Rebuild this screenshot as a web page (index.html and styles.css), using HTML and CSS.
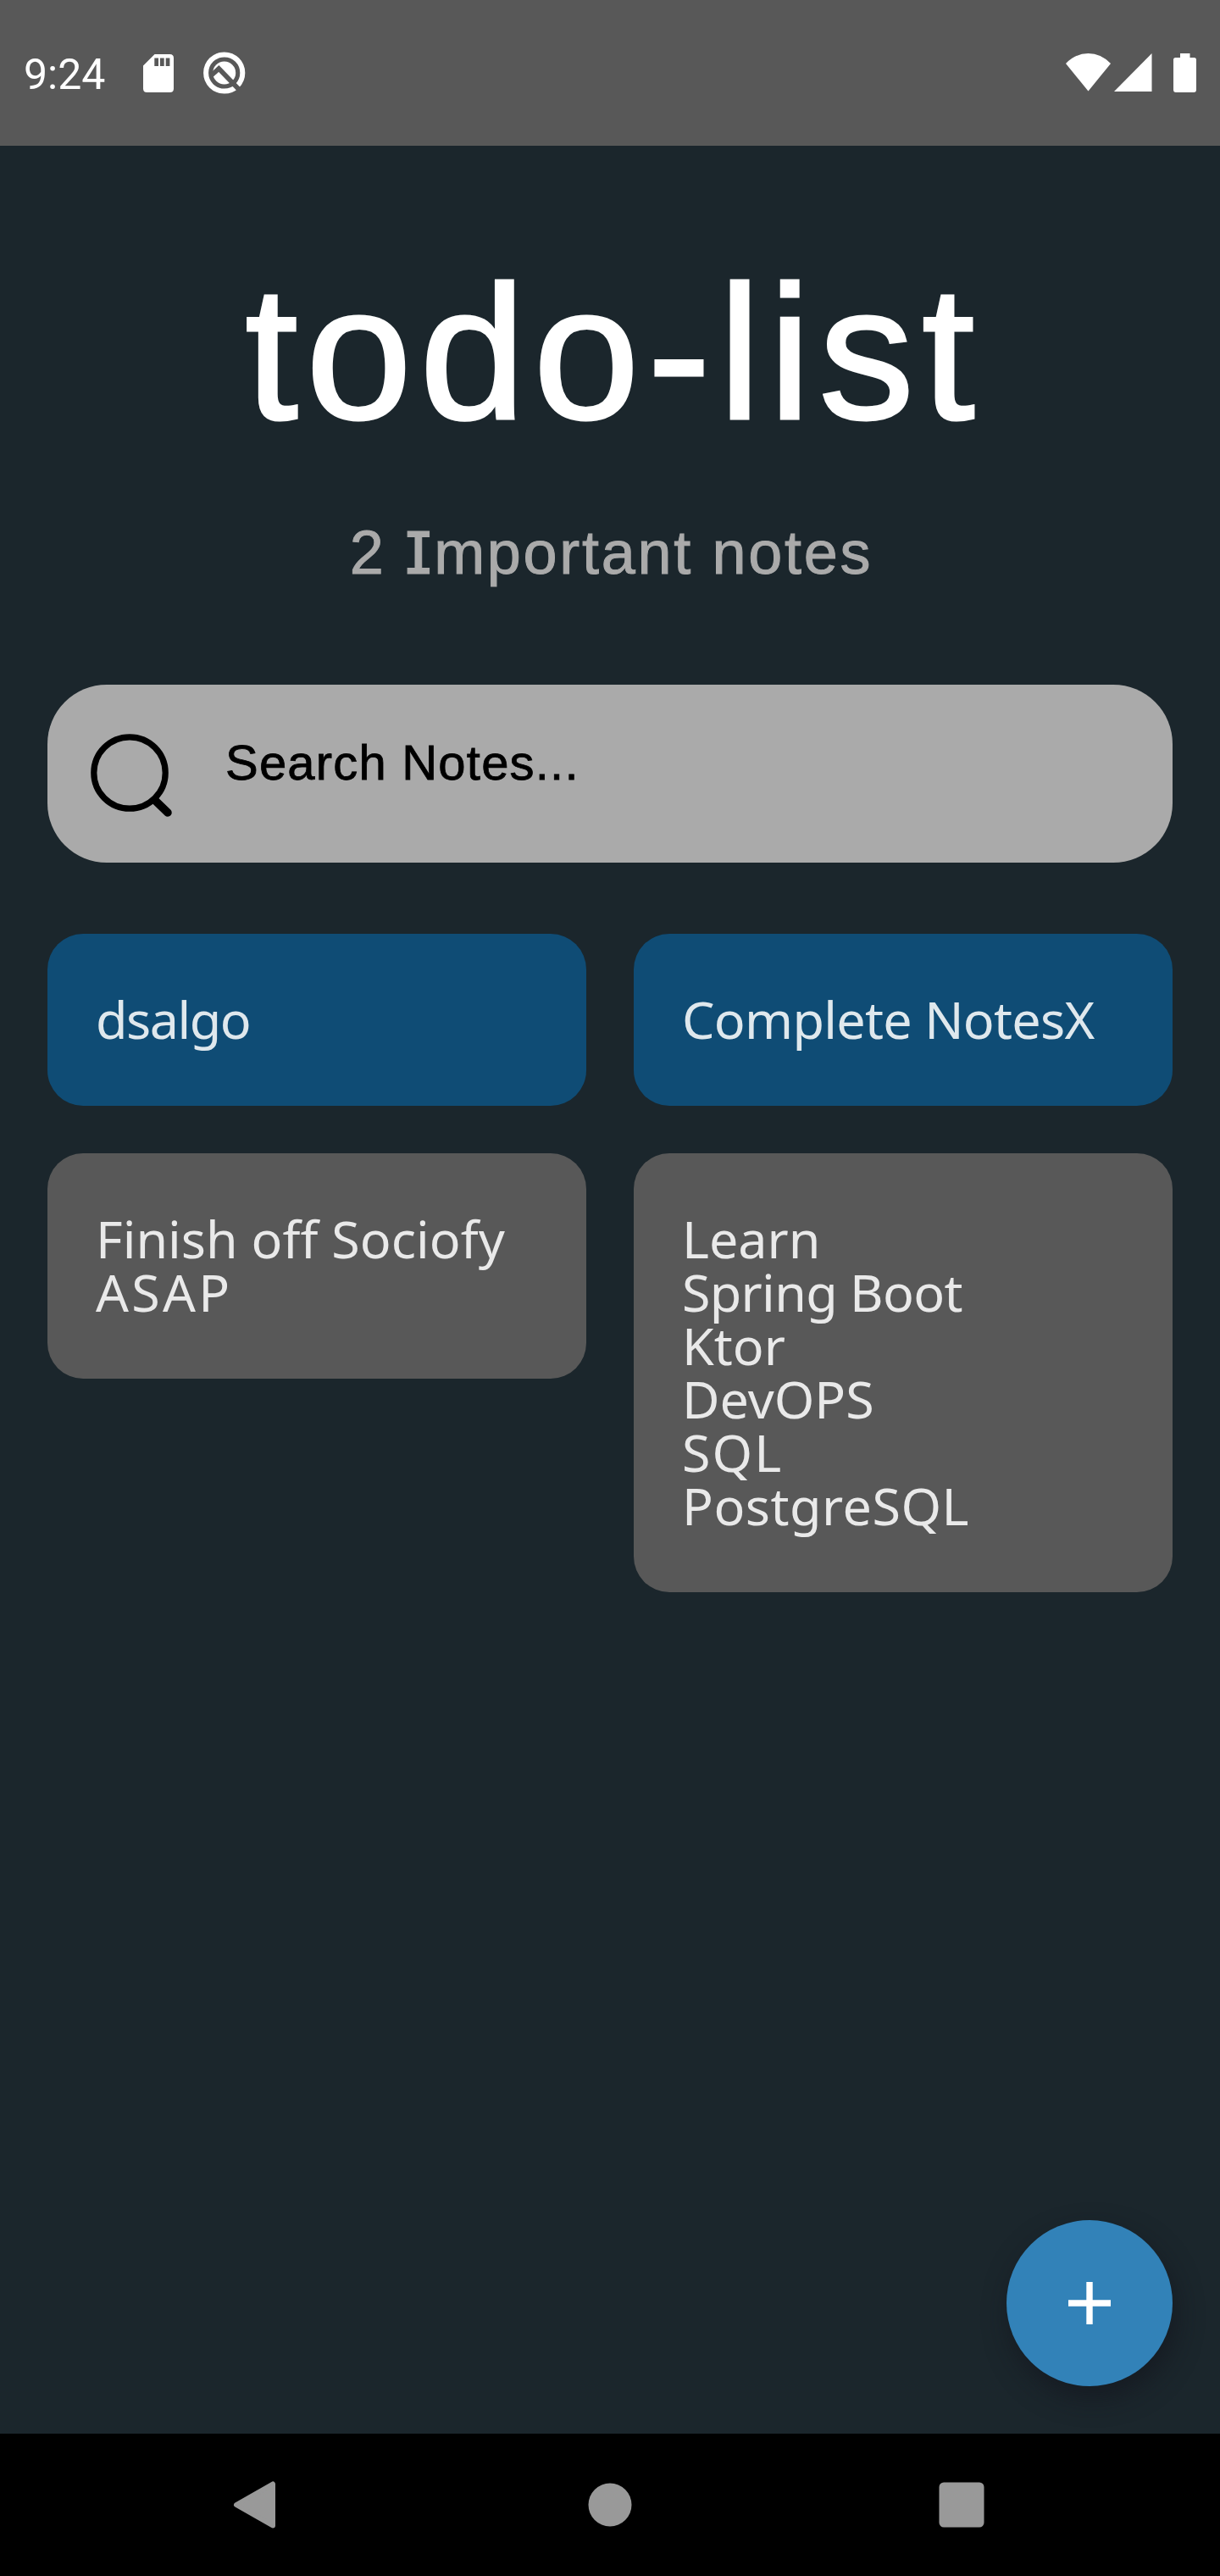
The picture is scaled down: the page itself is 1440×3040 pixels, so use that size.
FILE: index.html
```html
<!DOCTYPE html>
<html lang="en">
<head>
<meta charset="utf-8">
<title>todo-list</title>
<link rel="stylesheet" href="styles.css">
</head>
<body>
<header class="status">
  <div class="status-group">
    <span class="clock">9:24</span>
    <svg class="sd" width="36" height="45" viewBox="0 0 36 45"><path fill="#fff" fill-rule="evenodd" d="M13.5 0H31.500Q36 0 36 4.500V40.500Q36 45 31.500 45H4.500Q0 45 0 40.500V13.500ZM13.300 4.500V14H18V4.500ZM20 4.500V14H24.700V4.500ZM26.700 4.500V14H31.400V4.500Z"/></svg>
    <svg class="debug" width="50" height="50" viewBox="0 0 50 50"><circle cx="24.700" cy="25" r="21.600" fill="none" stroke="#fff" stroke-width="6"/><circle cx="24.700" cy="25" r="13.500" fill="#fff"/><path d="M10 27.500L18.300 20L42 44.500" fill="none" stroke="#585858" stroke-width="5.600"/></svg>
  </div>
  <div class="status-group">
    <svg width="53" height="45" viewBox="0 0 53 45"><path fill="#fff" d="M0 12Q11.500 0 26.500 0T53 12L26.500 44.500Z"/></svg>
    <svg class="signal" width="45" height="45" viewBox="0 0 45 45"><path fill="#fff" d="M0 45L44.500 0V45Z"/></svg>
    <svg class="battery" width="27" height="46" viewBox="0 0 27 46"><path fill="#fff" d="M8 0H19.500V5H24.500Q27 5 27 7.500V43Q27 46 24 46H3Q0 46 0 43V7.500Q0 5 2.500 5H8Z"/></svg>
  </div>
</header>
<main class="screen">
  <h1 class="title">todo-list</h1>
  <p class="subtitle">2 <span class="slab">I</span>mportant notes</p>
  <div class="search">
    <svg class="search-icon" width="98" height="100" viewBox="0 0 98 100"><circle cx="46" cy="46" r="42.200" fill="none" stroke="#000" stroke-width="7.200"/><path d="M76.500 79L91 93" stroke="#000" stroke-width="9.500" stroke-linecap="round"/></svg>
    <span class="search-text">Search Notes...</span>
  </div>
  <section class="notes">
    <div class="column">
      <article class="note important"><span class="line tight">dsalgo</span></article>
      <article class="note"><span class="line">Finish off Sociofy</span><span class="line wide">ASAP</span></article>
    </div>
    <div class="column">
      <article class="note important"><span class="line snug">Complete NotesX</span></article>
      <article class="note">
        <span class="line">Learn</span>
        <span class="line snug">Spring Boot</span>
        <span class="line">Ktor</span>
        <span class="line">DevOPS</span>
        <span class="line loose">SQL</span>
        <span class="line airy">PostgreSQL</span>
      </article>
    </div>
  </section>
  <button class="fab" aria-label="Add note"><svg width="50" height="50" viewBox="0 0 50 50"><path d="M0 25H50M25 0V50" stroke="#fff" stroke-width="7.400"/></svg></button>
</main>
<nav class="navbar">
  <svg width="54" height="56" viewBox="0 0 54 56"><path fill="#999" stroke="#999" stroke-width="6" stroke-linejoin="round" d="M48 3.500V52.500L5 28Z"/></svg>
  <svg class="home" width="54" height="56" viewBox="0 0 54 56"><circle cx="29" cy="28" r="25.500" fill="#999"/></svg>
  <svg width="54" height="56" viewBox="0 0 54 56"><rect x=".5" y="1.500" width="53" height="53" rx="5.500" fill="#999"/></svg>
</nav>
</body>
</html>
```
FILE: styles.css
```css
* { box-sizing: border-box; }
body {
  margin: 0;
  width: 1440px;
  height: 3040px;
  display: flex;
  flex-direction: column;
  background: #1b262c;
  font-family: "Liberation Sans", Arial, sans-serif;
}
svg { display: block; flex: none; }
.status {
  height: 172px;
  padding: 0 28px;
  display: flex;
  justify-content: space-between;
  background: #585858;
  color: #fff;
}
.status-group { display: flex; align-items: flex-start; padding-top: 63px; }
.clock {
  width: 141px;
  margin-top: -3px;
  font: 50px/57px Roboto, sans-serif;
}
.sd { margin-top: 1px; }
.debug { margin: -2px 0 0 35px; }
.signal { margin-left: 4px; }
.battery { margin-left: 25px; }
.screen {
  position: relative;
  flex: 1;
  padding: 114px 56px 0;
}
.title {
  margin: 0;
  padding-left: 9px;
  font-size: 225px;
  line-height: 260px;
  font-weight: 400;
  letter-spacing: 9.2px;
  text-align: center;
  white-space: nowrap;
  color: #fff;
  -webkit-text-stroke: 3px #fff;
}
.subtitle {
  margin: 61px 0 0;
  padding-left: 3px;
  font-size: 72px;
  line-height: 90px;
  letter-spacing: 2.7px;
  text-align: center;
  color: #aaa;
  -webkit-text-stroke: 1px #aaa;
}
.slab {
  font-family: Inter, sans-serif;
  font-size: 69px;
  line-height: 1;
  font-weight: 500;
  font-feature-settings: "cv08" 1;
}
.search {
  height: 210px;
  margin-top: 111px;
  padding: 52px 50px 0 51px;
  display: flex;
  align-items: flex-start;
  gap: 61px;
  border-radius: 70px;
  background: #aaa;
}
.search-icon { margin-top: 6px; }
.search-text {
  font-size: 58px;
  line-height: 80px;
  letter-spacing: 1.2px;
  color: #000;
  -webkit-text-stroke: .8px #000;
}
.notes {
  display: grid;
  grid-template-columns: 1fr 1fr;
  gap: 56px;
  margin-top: 84px;
}
.column { display: flex; flex-direction: column; gap: 56px; }
.note {
  padding: 69px 40px 71px 57px;
  border-radius: 42px;
  background: #585858;
  color: rgba(255, 255, 255, .87);
  font: 61px/63px "Noto Sans", sans-serif;
  white-space: nowrap;
}
.line { display: block; }
.tight { letter-spacing: -1.5px; }
.snug { letter-spacing: -.7px; }
.airy { letter-spacing: .5px; }
.loose { letter-spacing: 2px; }
.wide { letter-spacing: 3.3px; }
.important { background: #0f4c75; }
.fab {
  position: absolute;
  right: 56px;
  bottom: 56px;
  width: 196px;
  height: 196px;
  padding: 0;
  display: grid;
  place-items: center;
  border: 0;
  border-radius: 50%;
  background: #3282b8;
  box-shadow: 4px 14px 30px rgba(18, 20, 28, .6);
}
.home { overflow: visible; }
.navbar {
  height: 168px;
  padding: 0 278px 0 274px;
  display: flex;
  justify-content: space-between;
  align-items: center;
  background: #000;
}
```
